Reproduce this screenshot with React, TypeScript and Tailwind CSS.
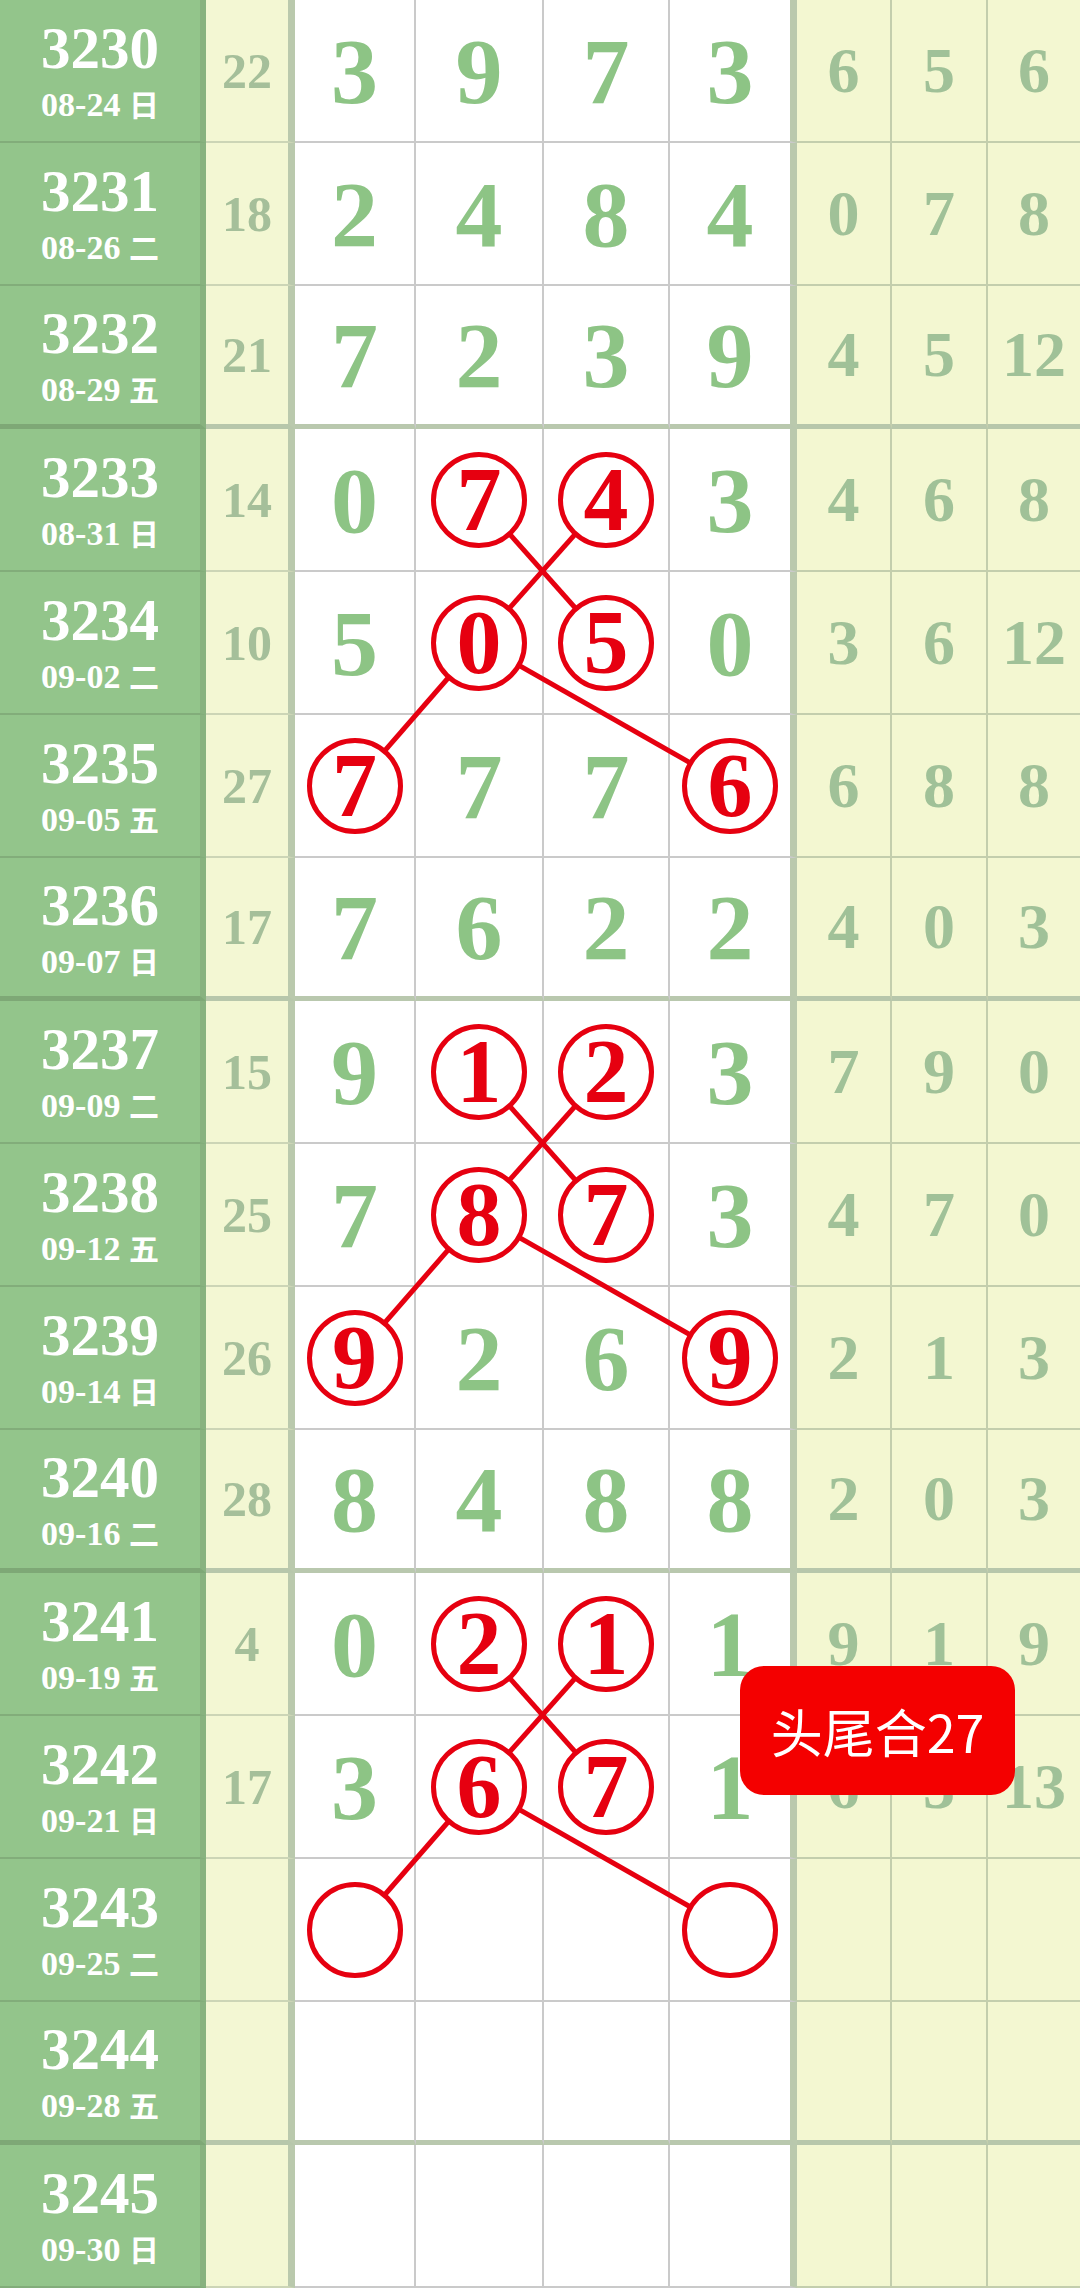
import React from 'react';

type Row = { p: string; d: string; w: string; s: string; n: string[]; r: string[] };

const rows: Row[] = [
  { p: '3230', d: '08-24', w: '日', s: '22', n: ['3', '9', '7', '3'], r: ['6', '5', '6'] },
  { p: '3231', d: '08-26', w: '二', s: '18', n: ['2', '4', '8', '4'], r: ['0', '7', '8'] },
  { p: '3232', d: '08-29', w: '五', s: '21', n: ['7', '2', '3', '9'], r: ['4', '5', '12'] },
  { p: '3233', d: '08-31', w: '日', s: '14', n: ['0', '7', '4', '3'], r: ['4', '6', '8'] },
  { p: '3234', d: '09-02', w: '二', s: '10', n: ['5', '0', '5', '0'], r: ['3', '6', '12'] },
  { p: '3235', d: '09-05', w: '五', s: '27', n: ['7', '7', '7', '6'], r: ['6', '8', '8'] },
  { p: '3236', d: '09-07', w: '日', s: '17', n: ['7', '6', '2', '2'], r: ['4', '0', '3'] },
  { p: '3237', d: '09-09', w: '二', s: '15', n: ['9', '1', '2', '3'], r: ['7', '9', '0'] },
  { p: '3238', d: '09-12', w: '五', s: '25', n: ['7', '8', '7', '3'], r: ['4', '7', '0'] },
  { p: '3239', d: '09-14', w: '日', s: '26', n: ['9', '2', '6', '9'], r: ['2', '1', '3'] },
  { p: '3240', d: '09-16', w: '二', s: '28', n: ['8', '4', '8', '8'], r: ['2', '0', '3'] },
  { p: '3241', d: '09-19', w: '五', s: '4', n: ['0', '2', '1', '1'], r: ['9', '1', '9'] },
  { p: '3242', d: '09-21', w: '日', s: '17', n: ['3', '6', '7', '1'], r: ['6', '3', '13'] },
  { p: '3243', d: '09-25', w: '二', s: '', n: ['', '', '', ''], r: ['', '', ''] },
  { p: '3244', d: '09-28', w: '五', s: '', n: ['', '', '', ''], r: ['', '', ''] },
  { p: '3245', d: '09-30', w: '日', s: '', n: ['', '', '', ''], r: ['', '', ''] },
];

// circled cells per row (index into the four white columns)
const hits: Record<number, number[]> = {
  3: [1, 2], 4: [1, 2], 5: [0, 3],
  7: [1, 2], 8: [1, 2], 9: [0, 3],
  11: [1, 2], 12: [1, 2], 13: [0, 3],
};

const thick = [2, 6, 10, 14];
const colX = [354.5, 479, 606, 730];
const cy = (i: number) => i * 143 + 70.5;

const links: [number, number, number, number][] = [];
[3, 7, 11].forEach((a) => {
  links.push([a, 1, a + 1, 2], [a, 2, a + 1, 1], [a + 1, 1, a + 2, 0], [a + 1, 1, a + 2, 3]);
});

const serif = "font-['Liberation_Serif','Noto_Sans_CJK_SC',serif] font-bold";
const whiteW = ['w-[121px]', 'w-[128px]', 'w-[126px]', 'w-[127px]'];
const rightW = ['w-[95px]', 'w-[96px]', 'w-[92px]'];

export default function App() {
  return (
    <div className={`relative w-[1080px] overflow-hidden bg-white ${serif}`}>
      <svg className="absolute inset-0 pointer-events-none" width={1080} height={2289}>
        {links.map(([r1, c1, r2, c2], k) => (
          <line key={k} x1={colX[c1]} y1={cy(r1)} x2={colX[c2]} y2={cy(r2)} stroke="#e60010" strokeWidth={5} />
        ))}
      </svg>

      {rows.map((row, i) => {
        const t = thick.includes(i);
        return (
          <div key={row.p} className="flex h-[143px]">
            <div
              className={`flex w-[206px] flex-col items-center justify-center gap-[10px] border-r-[6px] border-r-[#88b27f] bg-[#93c58b] text-white ${
                t ? 'border-b-[5px] border-b-[#7ea876]' : 'border-b-2 border-b-[#82ad7a]'
              }`}
            >
              <div className="text-[59px] leading-none">{row.p}</div>
              <div className="text-[34px] leading-none">
                {row.d} <span className="font-['Noto_Sans_CJK_SC',sans-serif] text-[30px]">{row.w}</span>
              </div>
            </div>
            <div
              className={`flex w-[89px] items-center justify-center border-r-[7px] border-r-[#bac9ad] bg-[#f3f7d3] text-[50px] leading-none text-[#a5bf9a] ${
                t ? 'border-b-[5px] border-b-[#b7c7ab]' : 'border-b-2 border-b-[#ccd5b6]'
              }`}
            >
              {row.s}
            </div>
            {row.n.map((v, c) => {
              const on = hits[i]?.includes(c);
              return (
                <div
                  key={c}
                  className={`flex items-center justify-center ${whiteW[c]} ${
                    c === 3 ? 'border-r-[7px] border-r-[#bac9ad]' : 'border-r-2 border-r-[#cacaca]'
                  } ${t ? 'border-b-[5px] border-b-[#b9c8ae]' : 'border-b-2 border-b-[#cacaca]'}`}
                >
                  {on ? (
                    <span className="relative z-10 flex h-[96px] w-[96px] items-center justify-center rounded-full border-[5px] border-[#e60010] bg-white text-[90px] leading-none text-[#e60010]">
                      {v}
                    </span>
                  ) : (
                    <span className="text-[94px] leading-none text-[#8dc485]">{v}</span>
                  )}
                </div>
              );
            })}
            {row.r.map((v, c) => (
              <div
                key={c}
                className={`flex items-center justify-center bg-[#f3f7d1] text-[64px] leading-none text-[#a0c198] ${rightW[c]} ${
                  c < 2 ? 'border-r-2 border-r-[#c3cead]' : ''
                } ${t ? 'border-b-[5px] border-b-[#b7c7ab]' : 'border-b-2 border-b-[#c3cead]'}`}
              >
                {v}
              </div>
            ))}
          </div>
        );
      })}

      <div className="absolute left-[740px] top-[1666px] z-20 flex h-[129px] w-[275px] items-center justify-center rounded-[24px] bg-[#f40000] font-['Noto_Sans_CJK_SC',sans-serif] text-[52px] font-normal text-white">
        头尾合27
      </div>
    </div>
  );
}
